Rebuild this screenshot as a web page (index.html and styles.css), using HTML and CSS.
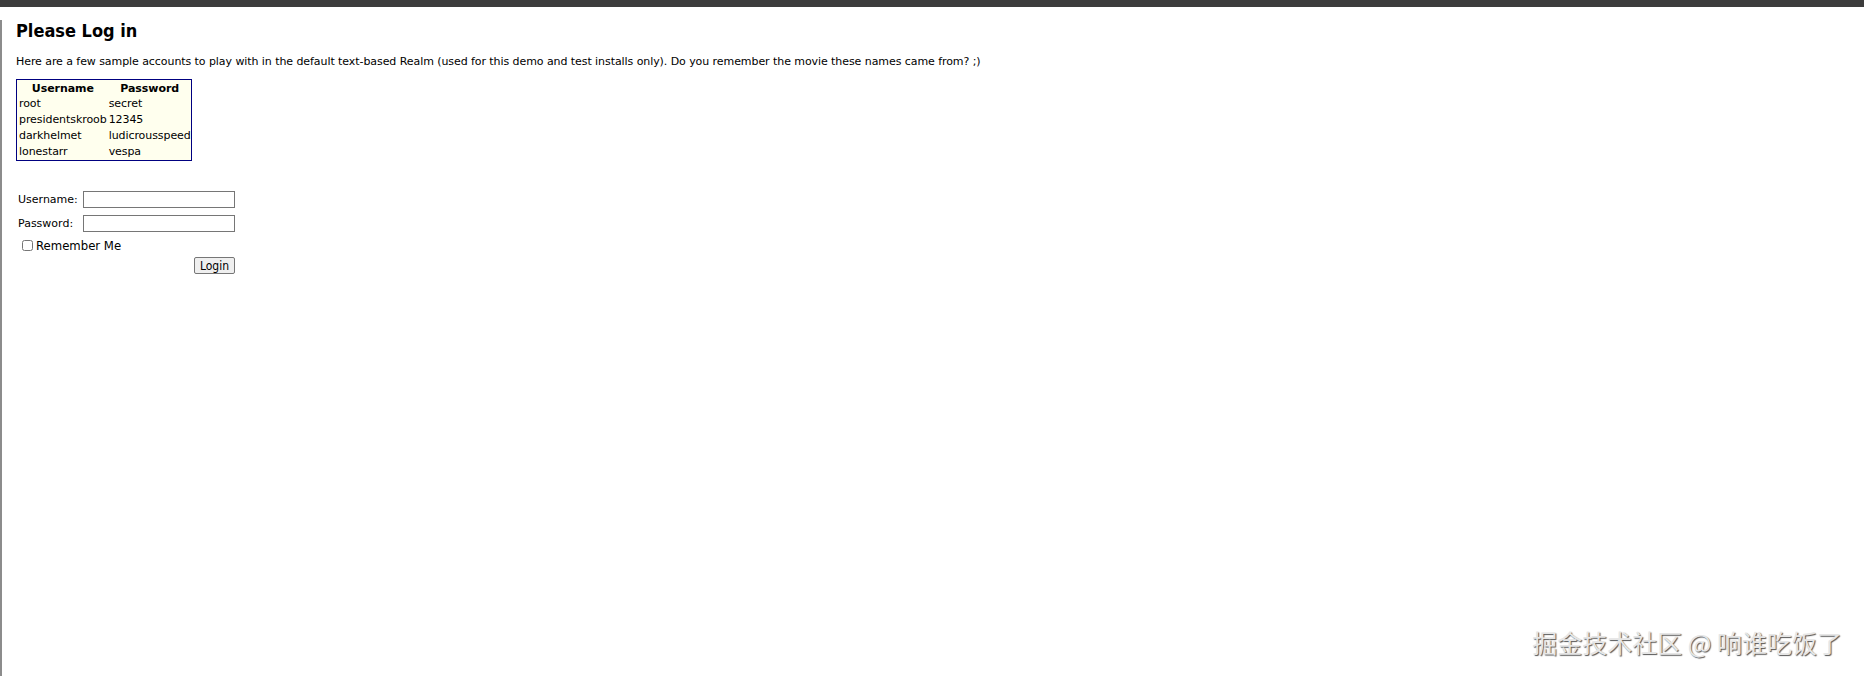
FILE: index.html
```html
<!DOCTYPE html>
<html lang="en">
<head>
<meta charset="utf-8">
<title>Please Log in</title>
<link rel="stylesheet" href="styles.css">
</head>
<body>
<div class="topbar"></div>
<div class="page">
  <h2 class="title">Please Log in</h2>
  <p class="intro">Here are a few sample accounts to play with in the default text-based Realm (used for this demo and test installs only). Do you remember the movie these names came from? ;)</p>
  <table class="accounts">
    <thead>
      <tr><th>Username</th><th>Password</th></tr>
    </thead>
    <tbody>
      <tr><td>root</td><td>secret</td></tr>
      <tr><td>presidentskroob</td><td>12345</td></tr>
      <tr><td>darkhelmet</td><td>ludicrousspeed</td></tr>
      <tr class="last-row"><td>lonestarr</td><td>vespa</td></tr>
    </tbody>
  </table>
  <form class="login-form" action="#" onsubmit="return false;">
    <div class="field">
      <label class="field-label" for="username">Username:</label>
      <input class="field-input" id="username" type="text">
    </div>
    <div class="field">
      <label class="field-label" for="password">Password:</label>
      <input class="field-input" id="password" type="password">
    </div>
    <div class="remember">
      <input class="remember-box" id="remember" type="checkbox">
      <label class="remember-label" for="remember">Remember Me</label>
    </div>
    <div class="actions">
      <button class="login-btn" type="submit">Login</button>
    </div>
  </form>
</div>
<div class="watermark">掘金技术社区 @ 响谁吃饭了</div>
</body>
</html>
```
FILE: styles.css
```css
html, body {
  margin: 0;
  padding: 0;
  background: #ffffff;
}

body {
  font-family: "DejaVu Sans", Verdana, sans-serif;
  color: #000000;
}

.topbar {
  height: 7px;
  background: #3c3c3c;
}

.page {
  box-sizing: border-box;
  min-height: calc(100vh - 7px);
  border-left: 2px solid #8c8c8c;
  padding: 0 14px;
}

.title {
  margin: 13px 0 0;
  font-family: "DejaVu Sans Condensed", "DejaVu Sans", sans-serif;
  font-size: 18px;
  font-weight: bold;
  line-height: 21px;
}

.intro {
  margin: 14px 0 0;
  font-size: 11px;
  line-height: 13px;
  letter-spacing: -0.07px;
}

.accounts {
  margin-top: 11px;
  border: 1px solid #000080;
  background: #ffffee;
  border-collapse: separate;
  border-spacing: 0;
  font-size: 11px;
  letter-spacing: -0.07px;
}

.accounts th,
.accounts td {
  padding: 2px 0 0 2px;
  line-height: 14px;
  text-align: left;
}

.accounts th {
  line-height: 13px;
  text-align: center;
  font-weight: bold;
}

.accounts .last-row td {
  padding-bottom: 1px;
}

.login-form {
  margin-top: 26px;
  width: 220px;
  font-size: 11px;
}

.field {
  display: flex;
  align-items: center;
  height: 24px;
}

.field-label {
  box-sizing: border-box;
  width: 67px;
  padding-left: 2px;
}

.field-input {
  box-sizing: border-box;
  width: 152px;
  height: 17px;
  margin: 0;
  padding: 0 2px;
  border: 1px solid #767676;
  background: #ffffff;
  font-size: 11px;
}

.remember {
  display: flex;
  align-items: center;
  height: 18px;
  margin-top: 1px;
}

.remember-box {
  width: 11px;
  height: 11px;
  margin: 0 3px 0 6px;
}

.remember-label {
  font-family: "DejaVu Sans Condensed", "DejaVu Sans", sans-serif;
  font-size: 13px;
}

.actions {
  display: flex;
  justify-content: flex-end;
  margin-top: 3px;
  width: 219px;
}

.login-btn {
  box-sizing: border-box;
  height: 17px;
  padding: 0 5px;
  border: 1px solid #767676;
  border-radius: 2px;
  background: #efefef;
  font-family: "DejaVu Sans Condensed", "DejaVu Sans", sans-serif;
  font-size: 12px;
  line-height: 14px;
  color: #000000;
}

.watermark {
  position: absolute;
  right: 22px;
  bottom: 20px;
  font-family: "Noto Sans CJK SC", "DejaVu Sans", sans-serif;
  font-size: 25px;
  line-height: 28px;
  color: #e6e6e6;
  text-shadow: 1px 1px 1px #555555;
}
```
